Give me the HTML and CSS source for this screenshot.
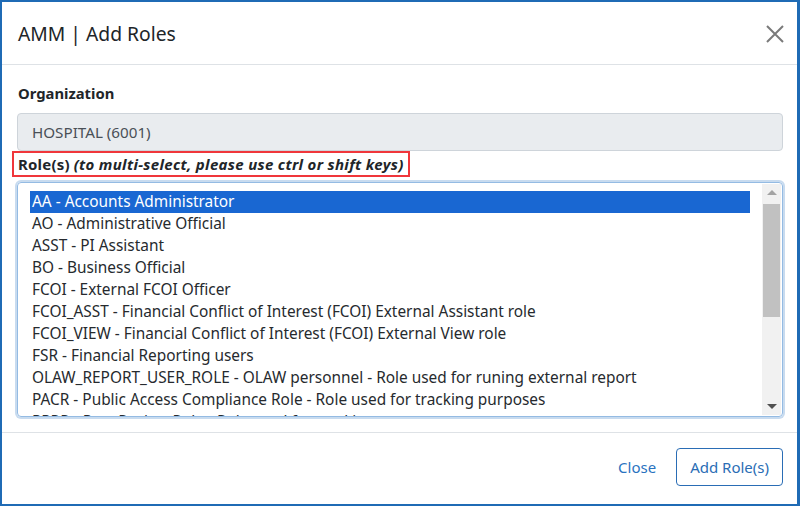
FILE: index.html
```html
<!DOCTYPE html>
<html>
<head>
<meta charset="utf-8">
<link rel="stylesheet" href="styles.css">
</head>
<body>
<div class="modal">
  <div class="modal-header">
    <h1 class="title">AMM | Add Roles</h1>
    <span class="close-x" aria-label="Close">
      <svg width="18" height="18" viewBox="0 0 18 18"><path d="M1 1L17 17M17 1L1 17" stroke="#7a7a7a" stroke-width="2" fill="none"/></svg>
    </span>
  </div>
  <div class="modal-body">
    <div class="label">Organization</div>
    <div class="input">HOSPITAL (6001)</div>
    <div class="roles-label"><b>Role(s)</b> <i>(to multi-select, please use ctrl or shift keys)</i></div>
    <div class="select">
      <div class="options">
        <div class="opt selected">AA - Accounts Administrator</div>
        <div class="opt">AO - Administrative Official</div>
        <div class="opt">ASST - PI Assistant</div>
        <div class="opt">BO - Business Official</div>
        <div class="opt">FCOI - External FCOI Officer</div>
        <div class="opt">FCOI_ASST - Financial Conflict of Interest (FCOI) External Assistant role</div>
        <div class="opt">FCOI_VIEW - Financial Conflict of Interest (FCOI) External View role</div>
        <div class="opt">FSR - Financial Reporting users</div>
        <div class="opt">OLAW_REPORT_USER_ROLE - OLAW personnel - Role used for runing external report</div>
        <div class="opt">PACR - Public Access Compliance Role - Role used for tracking purposes</div>
        <div class="opt">PPRR - Post Review Role - Role used for tracking purposes</div>
      </div>
      <div class="scrollbar">
        <div class="arrow up"></div>
        <div class="track"><div class="thumb"></div></div>
        <div class="arrow down"></div>
      </div>
    </div>
  </div>
  <div class="modal-footer">
    <span class="btn-link">Close</span>
    <span class="btn-outline">Add Role(s)</span>
  </div>
</div>
</body>
</html>
```
FILE: styles.css
```css
html, body {
  margin: 0;
  padding: 0;
}
body {
  background: #1f6bb5;
  font-family: "Noto Sans", "Open Sans", sans-serif;
  color: #212529;
  width: 800px;
  height: 506px;
  overflow: hidden;
}
.modal {
  margin: 2px 3px 0 2px;
  height: 502px;
  background: #fff;
  box-sizing: border-box;
  display: flex;
  flex-direction: column;
}
.modal-header {
  height: 62px;
  border-bottom: 1px solid #dee2e6;
  display: flex;
  align-items: center;
  justify-content: space-between;
  padding: 0 13px 0 16px;
}
.title {
  margin: 0;
  font-size: 19.3px;
  font-weight: 400;
  color: #212529;
  line-height: 24px;
  padding-top: 1px;
}
.close-x {
  display: flex;
  width: 18px;
  height: 18px;
  margin-top: 1px;
}
.modal-body {
  padding: 16px 14px 15px 15px;
}
.label {
  font-weight: 700;
  font-size: 14.8px;
  line-height: 24px;
  margin-bottom: 8px;
  padding-left: 1px;
}
.input {
  height: 38px;
  box-sizing: border-box;
  background: #e9ecef;
  border: 1px solid #ced4da;
  border-radius: 4px;
  padding: 0 14px;
  display: flex;
  align-items: center;
  font-size: 15.2px;
  color: #495057;
}
.roles-label {
  display: inline-block;
  border: 2px solid #f0363b;
  padding: 0 4px 0 4px;
  margin-left: -5px;
  line-height: 22px;
  font-size: 15px;
  color: #212529;
}
.roles-label b {
  letter-spacing: 0.2px;
}
.roles-label i {
  font-weight: 700;
  letter-spacing: 0.32px;
}
.select {
  margin-top: 5px;
  height: 235px;
  box-sizing: border-box;
  border: 1px solid #94bbe3;
  border-radius: 4px;
  box-shadow: 0 0 0 2px #c8dbef;
  display: flex;
  overflow: hidden;
}
.options {
  flex: 1;
  padding: 8px 12px 0 12px;
  overflow: hidden;
}
.opt {
  height: 22px;
  line-height: 22px;
  font-size: 15.4px;
  padding: 0 2px;
  white-space: nowrap;
  color: #262a2e;
}
.opt.selected {
  background: #1967d2;
  color: #fff;
}
.scrollbar {
  width: 19px;
  margin: 1px 1px 1px 0;
  background: #f1f1f1;
  display: flex;
  flex-direction: column;
}
.arrow {
  height: 17px;
  display: flex;
  align-items: center;
  justify-content: center;
}
.arrow.up::before {
  content: "";
  border-left: 5px solid transparent;
  border-right: 5px solid transparent;
  border-bottom: 5px solid #a3a3a3;
}
.arrow.down::before {
  content: "";
  border-left: 5px solid transparent;
  border-right: 5px solid transparent;
  border-top: 5px solid #505050;
}
.track {
  flex: 1;
  padding: 3px 1px;
}
.thumb {
  height: 113px;
  background: #c1c1c1;
}
.modal-footer {
  flex: 1;
  border-top: 1px solid #dee2e6;
  display: flex;
  align-items: flex-start;
  justify-content: flex-end;
  padding: 15px 14px 0 0;
  gap: 8px;
}
.btn-link {
  height: 38px;
  display: flex;
  align-items: center;
  padding: 0 12px;
  color: #2a73bf;
  font-size: 15px;
}
.btn-outline {
  height: 38px;
  box-sizing: border-box;
  display: flex;
  align-items: center;
  padding: 0 13px;
  border: 1px solid #2a6db5;
  border-radius: 4px;
  color: #2a6db5;
  font-size: 15px;
}
```
